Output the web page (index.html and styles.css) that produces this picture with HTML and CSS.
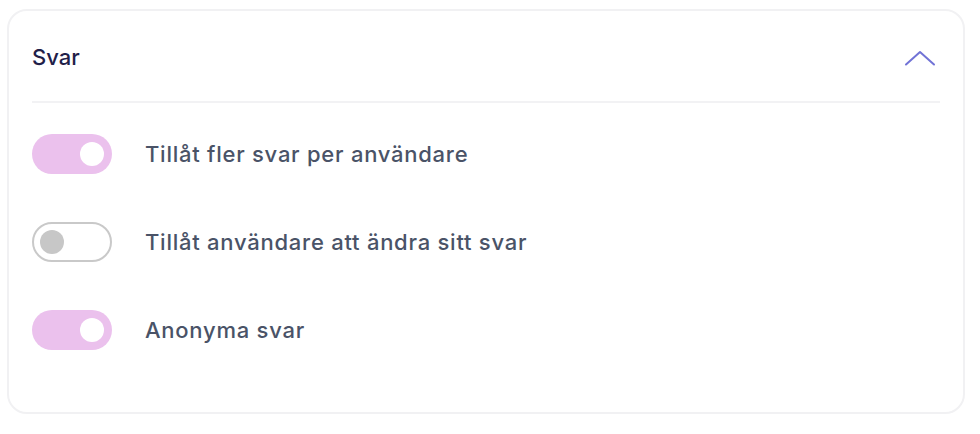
FILE: index.html
```html
<!DOCTYPE html>
<html lang="sv">
<head>
<meta charset="utf-8">
<link rel="stylesheet" href="styles.css">
</head>
<body>
<section class="card">
  <header class="card-header">
    <h2 class="title">Svar</h2>
    <svg class="chevron" width="32" height="16" viewBox="0 0 32 16" aria-hidden="true">
      <polyline points="2,14.5 16,2 30,14.5" fill="none" stroke="#7173d6" stroke-width="2" stroke-linecap="round" stroke-linejoin="round"/>
    </svg>
  </header>
  <ul class="options">
    <li class="option">
      <span class="toggle on"><span class="knob"></span></span>
      <span class="label">Tillåt fler svar per användare</span>
    </li>
    <li class="option">
      <span class="toggle off"><span class="knob"></span></span>
      <span class="label">Tillåt användare att ändra sitt svar</span>
    </li>
    <li class="option">
      <span class="toggle on"><span class="knob"></span></span>
      <span class="label">Anonyma svar</span>
    </li>
  </ul>
</section>
</body>
</html>
```
FILE: styles.css
```css
* { box-sizing: border-box; }
html, body { margin: 0; padding: 0; background: #ffffff; }
body {
  font-family: Inter, "Noto Sans", sans-serif;
  padding: 9px 15px 0 7px;
}
.card {
  width: 958px;
  height: 405px;
  border: 2px solid #f1f1f3;
  border-radius: 20px;
  padding: 0 23px;
  background: #fff;
}
.card-header {
  height: 92px;
  display: flex;
  align-items: center;
  justify-content: space-between;
  border-bottom: 2px solid #f2f2f4;
}
.title {
  margin: 0;
  font-size: 22px;
  font-weight: 500;
  color: #1f2049;
  padding-top: 1px;
}
.chevron {
  margin-right: 4px;
  margin-top: 3px;
}
.options {
  list-style: none;
  margin: 0;
  padding: 31px 0 0 0;
  display: flex;
  flex-direction: column;
  gap: 48px;
}
.option {
  display: flex;
  align-items: center;
  gap: 33px;
  height: 40px;
}
.toggle {
  width: 80px;
  height: 40px;
  border-radius: 20px;
  display: flex;
  align-items: center;
  flex-shrink: 0;
}
.toggle.on {
  background: #ebc1ed;
  justify-content: flex-end;
  padding-right: 8px;
}
.toggle.off {
  background: #fff;
  border: 2px solid #c9c9c9;
  padding-left: 6px;
}
.knob {
  width: 24px;
  height: 24px;
  border-radius: 50%;
}
.toggle.on .knob { background: #fff; }
.toggle.off .knob { background: #c7c7c7; }
.label {
  font-size: 22px;
  font-weight: 500;
  letter-spacing: 0.75px;
  color: #4a5367;
}
```
